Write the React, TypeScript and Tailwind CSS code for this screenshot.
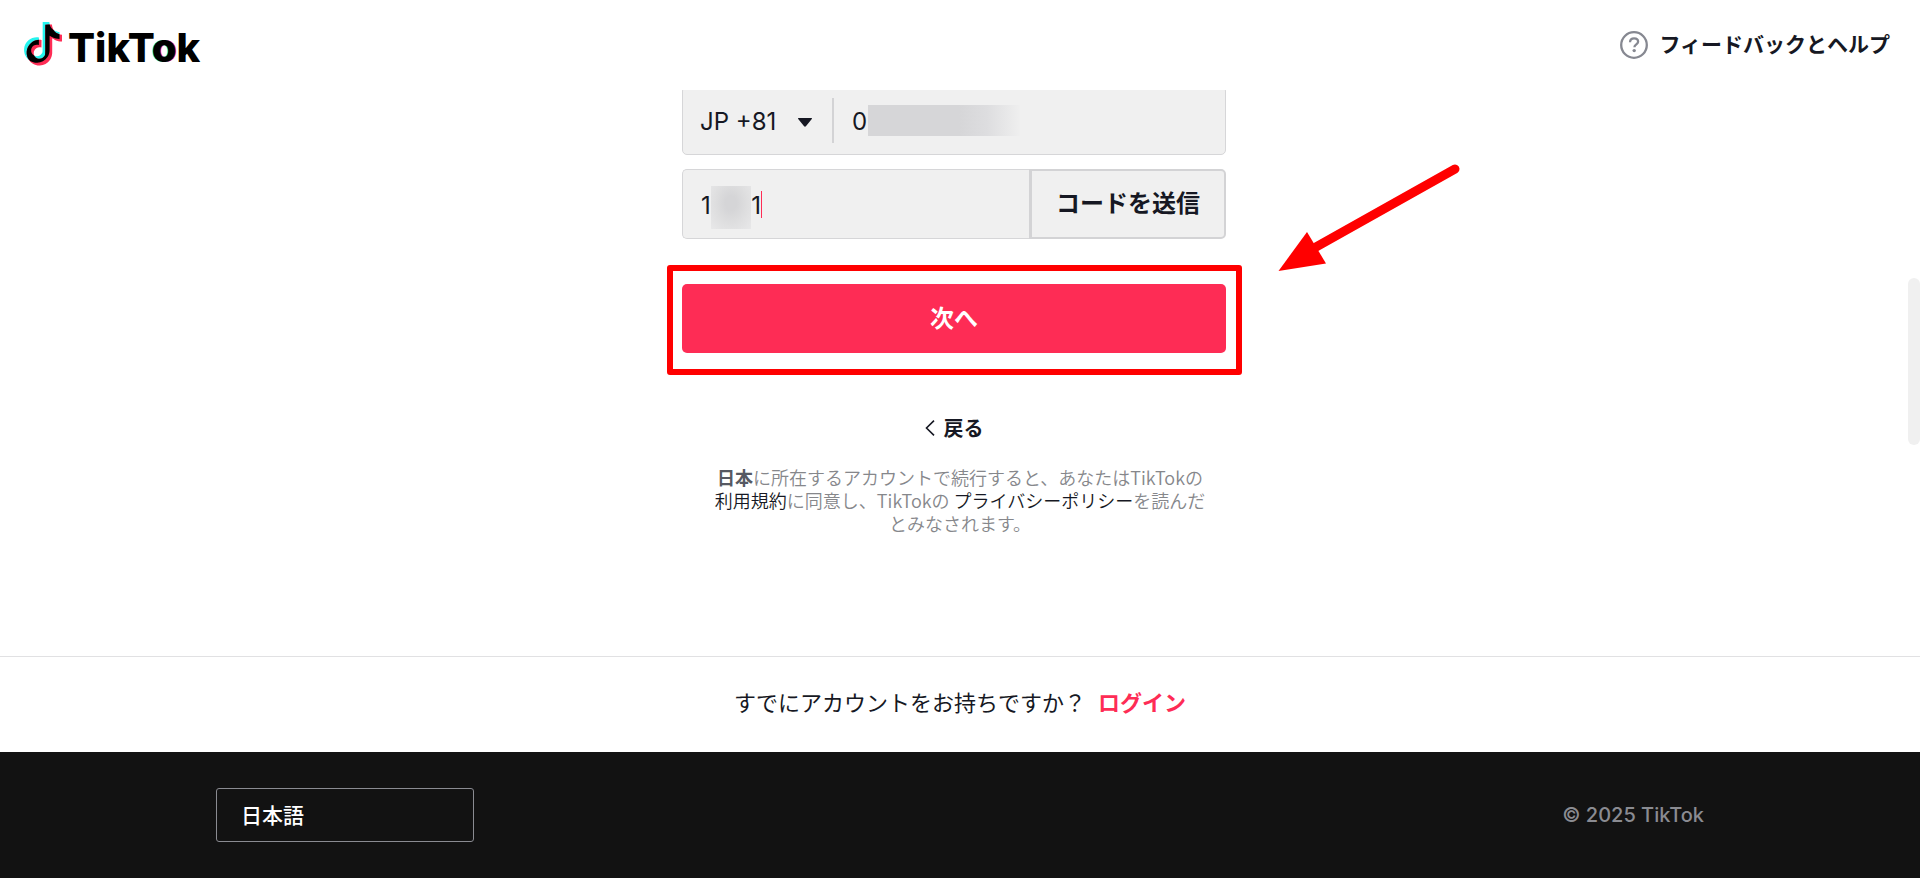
import React, { useState } from "react";

const NOTE =
  "M12.525.02c1.31-.02 2.61-.01 3.91-.02.08 1.53.63 3.09 1.75 4.17 1.12 1.11 2.7 1.62 4.24 1.79v4.03c-1.44-.05-2.89-.35-4.2-.97-.57-.26-1.1-.59-1.62-.93-.01 2.92.01 5.84-.02 8.75-.08 1.4-.54 2.79-1.35 3.94-1.31 1.92-3.58 3.17-5.91 3.21-1.43.08-2.86-.31-4.08-1.03-2.02-1.19-3.44-3.37-3.65-5.71-.02-.5-.03-1-.01-1.49.18-1.9 1.12-3.72 2.58-4.96 1.66-1.44 3.98-2.13 6.15-1.72.02 1.48-.04 2.96-.04 4.44-.99-.32-2.15-.23-3.02.37-.63.41-1.11 1.04-1.36 1.75-.21.51-.15 1.07-.14 1.61.24 1.64 1.82 3.02 3.5 2.87 1.12-.01 2.19-.66 2.77-1.61.19-.33.4-.67.41-1.06.1-1.79.06-3.57.07-5.36.01-4.03-.01-8.05.02-12.07z";

function Logo() {
  return (
    <a href="#home" aria-label="TikTok" className="flex items-center gap-[6px] pb-[2px]">
      <svg width="38" height="44" viewBox="0 0 38 44" aria-hidden="true">
        <defs>
          <clipPath id="note-overlap">
            <path d={NOTE} transform="translate(0 2.6) scale(1.7)" />
          </clipPath>
        </defs>
        <path d={NOTE} fill="#25f4ee" transform="translate(-2.6 0) scale(1.7)" />
        <path d={NOTE} fill="#fe2c55" transform="translate(0 2.6) scale(1.7)" />
        <g clipPath="url(#note-overlap)">
          <path d={NOTE} fill="#000" transform="translate(-2.6 0) scale(1.7)" />
        </g>
      </svg>
      <span className="pt-2 font-['Inter',sans-serif] text-[40px] leading-[44px] font-extrabold text-black">
        TikT
        <span className="[text-shadow:-1px_0_0_#25f4ee,1px_0_0_#fe2c55]">o</span>k
      </span>
    </a>
  );
}

function Header() {
  return (
    <header className="flex h-[90px] shrink-0 items-center justify-between bg-white pr-[30px] pl-6">
      <Logo />
      <a href="#help" className="flex items-center gap-[11px] text-[21px] leading-7 font-bold">
        <svg width="28" height="28" viewBox="0 0 28 28" fill="none" stroke="#868891" aria-hidden="true">
          <circle cx="14" cy="14" r="12.8" strokeWidth="2.3" />
          <path d="M10 11.2c.1-2.4 1.7-3.9 4.1-3.9 2.3 0 4 1.4 4 3.5 0 2.5-3.7 2.7-3.7 5.5" strokeWidth="2.3" />
          <circle cx="14.2" cy="19.6" r="1.7" fill="#868891" stroke="none" />
        </svg>
        <span className="pb-1">フィードバックとヘルプ</span>
      </a>
    </header>
  );
}

function SignupForm() {
  const [phone, setPhone] = useState("0");
  const [code, setCode] = useState("1      1");
  return (
    <form
      className="-mt-1 flex w-full max-w-[544px] flex-col items-center"
      onSubmit={(e: React.FormEvent) => e.preventDefault()}
    >
      <div className="flex h-[69px] w-full items-center rounded-[5px] border border-[#d6d6d8] bg-[#f0f0f0] font-['Inter',sans-serif] text-2xl">
        <div className="relative flex h-[45px] w-[151px] items-center border-r-2 border-[#d3d3d5]">
          <select
            aria-label="国コード"
            className="h-full w-full cursor-pointer appearance-none bg-transparent pt-[2px] pl-[17px] outline-none"
          >
            <option>JP +81</option>
          </select>
          <svg
            className="pointer-events-none absolute top-[20px] right-5"
            width="14"
            height="9"
            viewBox="0 0 14 9"
            aria-hidden="true"
          >
            <path d="M.6 0h12.8c.6 0 .8.7.4 1.1L7.9 8.3c-.5.5-1.3.5-1.8 0L.2 1.1C-.2.7 0 0 .6 0z" fill="#161823" />
          </svg>
        </div>
        <div className="relative flex h-full flex-1 items-center">
          <input
            aria-label="電話番号"
            type="tel"
            value={phone}
            onChange={(e) => setPhone(e.target.value)}
            className="h-full w-full bg-transparent pt-[2px] pl-[18px] outline-none"
          />
          <span className="pointer-events-none absolute top-[18px] left-[34px] h-[31px] w-[152px] bg-[linear-gradient(to_right,#d6d6d8_60%,#dddddf_78%,#efefef)]" />
        </div>
      </div>

      <div className="mt-[14px] flex h-[70px] w-full font-['Inter',sans-serif] text-2xl">
        <div className="relative min-w-0 flex-1">
          <input
            aria-label="認証コード"
            value={code}
            onChange={(e) => setCode(e.target.value)}
            className="h-full w-full rounded-l-[5px] border border-r-0 border-[#d6d6d8] bg-[#f0f0f0] pt-[2px] pl-[18px] outline-none"
          />
          <span className="pointer-events-none absolute top-[17px] left-[29px] h-[43px] w-10 bg-[radial-gradient(ellipse_at_50%_40%,#d5d5d7_20%,#dededf_55%,#e8e8e9_100%)]" />
          <span className="pointer-events-none absolute top-[22px] left-[79px] h-[27px] w-px bg-[#fe2c55]" />
        </div>
        <button
          type="button"
          className="w-[197px] rounded-r-[5px] border-2 border-l-3 border-[#d3d3d5] bg-[#f0f0f0] pb-1 font-['Noto_Sans_CJK_JP',sans-serif] text-2xl font-bold"
        >
          コードを送信
        </button>
      </div>

      <div className="relative mt-[45px] w-full">
        <button
          type="submit"
          className="h-[69px] w-full rounded-[5px] bg-[#fe2c55] pb-1 text-2xl font-bold text-white"
        >
          次へ
        </button>
        <span className="pointer-events-none absolute -top-[19px] -right-4 -bottom-[22px] -left-[15px] rounded-[3px] border-6 border-[#ff0000]" />
        <svg
          className="pointer-events-none absolute -top-[124px] left-[594px]"
          width="190"
          height="114"
          viewBox="0 0 190 114"
          aria-hidden="true"
        >
          <path d="M40 87L179 9" stroke="#ff0000" strokeWidth="9" strokeLinecap="round" />
          <path d="M2.5 111L31 72l19 31.5z" fill="#ff0000" />
        </svg>
      </div>

      <a href="#back" className="mt-[61px] flex items-center gap-[9px] text-xl leading-7 font-bold">
        <svg width="10" height="16" viewBox="0 0 10 16" fill="none" stroke="#161823" strokeWidth="1.6" aria-hidden="true">
          <path d="M9 .6L1.5 8 9 15.4" />
        </svg>
        戻る
      </a>

      <p className="mt-6 pl-3 text-center text-[18px] leading-[23px] font-[350] whitespace-nowrap text-[#86878b]">
        <strong className="font-bold text-[#565962]">日本</strong>
        に所在するアカウントで続行すると、あなたはTikTokの
        <br />
        <a href="#terms" className="text-[#161823]">利用規約</a>
        に同意し、TikTokの{" "}
        <a href="#privacy" className="text-[#161823]">プライバシーポリシー</a>
        を読んだ
        <br />
        とみなされます。
      </p>
    </form>
  );
}

export default function App() {
  return (
    <div
      lang="ja"
      className="relative flex min-h-screen flex-col bg-white font-['Noto_Sans_CJK_JP',sans-serif] text-[#161823]"
    >
      <Header />
      <main className="flex flex-1 justify-center overflow-hidden pr-3 pb-20">
        <SignupForm />
      </main>
      <section className="flex h-24 shrink-0 items-center justify-center gap-3 border-t border-[#e1e1e3] pb-2 text-[22px] leading-8">
        <span>すでにアカウントをお持ちですか？</span>
        <a href="#login" className="font-bold text-[#fe2c55]">ログイン</a>
      </section>
      <footer className="flex h-[126px] shrink-0 items-center justify-between bg-[#121212] px-[216px]">
        <select
          aria-label="言語"
          className="h-[54px] w-[258px] cursor-pointer appearance-none rounded-[3px] border border-[#8a8b91] bg-[#121212] pl-6 text-[21px] font-medium text-white outline-none"
        >
          <option>日本語</option>
        </select>
        <span className="font-['Inter',sans-serif] text-xl font-medium text-[#8a8b91]">© 2025 TikTok</span>
      </footer>
      <span className="pointer-events-none absolute top-[278px] right-0 h-[167px] w-3 rounded-full bg-[#f0f0f0]" />
    </div>
  );
}
